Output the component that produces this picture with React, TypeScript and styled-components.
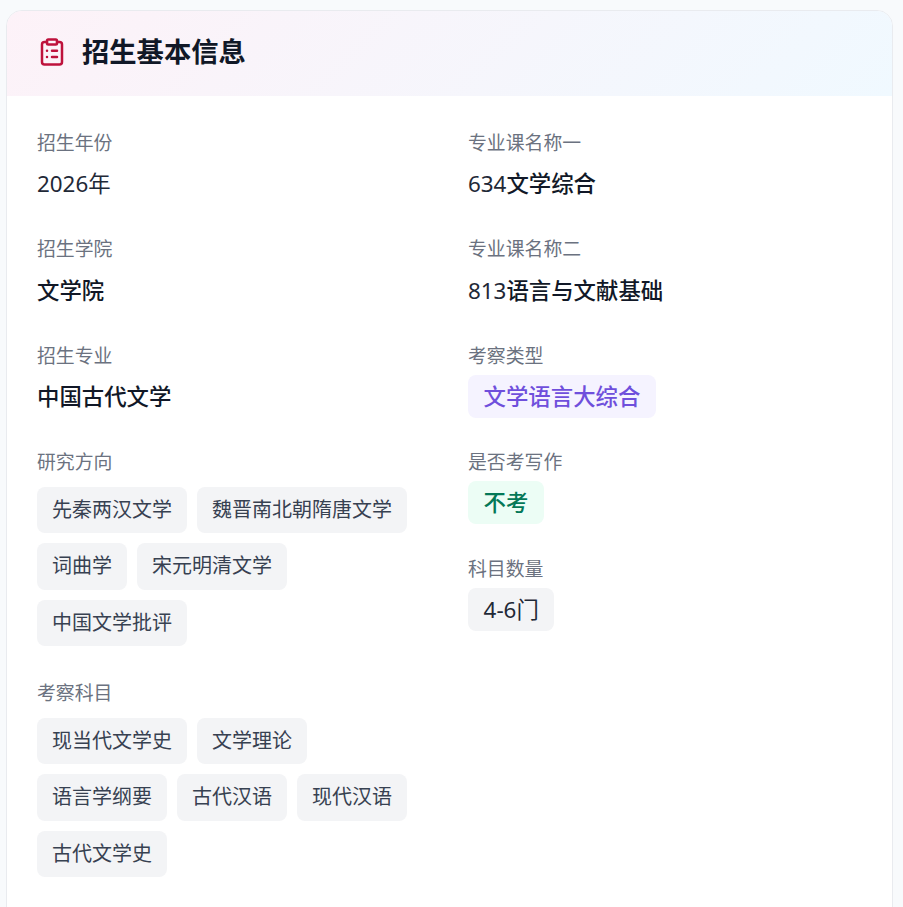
import React from "react";
import styled, { createGlobalStyle } from "styled-components";

const Global = createGlobalStyle`
  html, body { margin: 0; padding: 0; background: #f8fafc; }
  body { font-family: "Noto Sans", "Noto Sans CJK SC", sans-serif; color: #1f2937; }
`;

const Page = styled.div`
  height: 907px;
  overflow: hidden;
  padding: 10px 10px 0 6px;
  box-sizing: border-box;
`;

const Card = styled.section`
  background: #fff;
  border: 1px solid #e9ebef;
  border-radius: 16px;
  overflow: hidden;
  min-height: 960px;
`;

const Header = styled.header`
  height: 85px;
  display: flex;
  align-items: center;
  gap: 15px;
  padding-left: 30px;
  background: linear-gradient(135deg, #fdf2f8 0%, #f0f9ff 100%);

  svg {
    margin-bottom: 4px;
  }
`;

const Title = styled.h2`
  margin: 0 0 3px;
  font-size: 27.3px;
  line-height: 36px;
  font-weight: 700;
  color: #111827;
`;

const Body = styled.div`
  display: grid;
  grid-template-columns: 399px 399px;
  column-gap: 32px;
  padding: 33px 30px 30px;
`;

const Column = styled.div`
  display: flex;
  flex-direction: column;
  gap: 30.4px;
`;

const Field = styled.div`
  display: flex;
  flex-direction: column;
  gap: 5px;
`;

const Label = styled.div`
  font-size: 18.88px;
  line-height: 28px;
  color: #6b7280;
`;

const Value = styled.div`
  font-size: 22.4px;
  line-height: 41px;
  padding-top: 1.4px;
  padding-bottom: 0.6px;
  font-weight: 500;
  color: #111827;
`;

const Plain = styled.span`
  font-weight: 400;
  color: #1f2937;
`;

const Tags = styled.div`
  display: flex;
  flex-wrap: wrap;
  gap: 10px;
  margin: 5.6px 0 2.4px;
`;

const Tag = styled.span`
  background: #f3f4f6;
  border-radius: 8px;
  padding: 0 15px;
  height: 46.5px;
  line-height: 46px;
  font-size: 20px;
  color: #374151;
`;

const Badge = styled.span<{ $bg: string; $fg: string; $weight: number }>`
  align-self: flex-start;
  background: ${(p) => p.$bg};
  color: ${(p) => p.$fg};
  font-weight: ${(p) => p.$weight};
  border-radius: 8px;
  padding: 0 15.6px;
  height: 43px;
  line-height: 43px;
  font-size: 22.4px;
`;

const ClipboardIcon = () => (
  <svg width="30" height="30" viewBox="0 0 24 24" fill="none" stroke="#be123c" strokeWidth="2" strokeLinecap="round" strokeLinejoin="round">
    <rect x="8" y="2" width="8" height="4" rx="1" />
    <path d="M16 4h2a2 2 0 0 1 2 2v14a2 2 0 0 1-2 2H6a2 2 0 0 1-2-2V6a2 2 0 0 1 2-2h2" />
    <path d="M12 11h4M12 16h4M8 11h.01M8 16h.01" />
  </svg>
);

const TagField = ({ label, tags }: { label: string; tags: string[] }) => (
  <Field>
    <Label>{label}</Label>
    <Tags>
      {tags.map((t) => (
        <Tag key={t}>{t}</Tag>
      ))}
    </Tags>
  </Field>
);

export default function App() {
  return (
    <Page>
      <Global />
      <Card>
        <Header>
          <ClipboardIcon />
          <Title>招生基本信息</Title>
        </Header>
        <Body>
          <Column>
            <Field>
              <Label>招生年份</Label>
              <Value><Plain>2026年</Plain></Value>
            </Field>
            <Field>
              <Label>招生学院</Label>
              <Value>文学院</Value>
            </Field>
            <Field>
              <Label>招生专业</Label>
              <Value>中国古代文学</Value>
            </Field>
            <TagField label="研究方向" tags={["先秦两汉文学", "魏晋南北朝隋唐文学", "词曲学", "宋元明清文学", "中国文学批评"]} />
            <TagField label="考察科目" tags={["现当代文学史", "文学理论", "语言学纲要", "古代汉语", "现代汉语", "古代文学史"]} />
          </Column>
          <Column>
            <Field>
              <Label>专业课名称一</Label>
              <Value><Plain>634</Plain>文学综合</Value>
            </Field>
            <Field>
              <Label>专业课名称二</Label>
              <Value><Plain>813</Plain>语言与文献基础</Value>
            </Field>
            <Field>
              <Label>考察类型</Label>
              <Badge $bg="#f5f3ff" $fg="#6f4fdc" $weight={500}>文学语言大综合</Badge>
            </Field>
            <Field>
              <Label>是否考写作</Label>
              <Badge $bg="#ecfdf5" $fg="#047857" $weight={500}>不考</Badge>
            </Field>
            <Field>
              <Label>科目数量</Label>
              <Badge $bg="#f3f4f6" $fg="#1f2937" $weight={400}>4-6门</Badge>
            </Field>
          </Column>
        </Body>
      </Card>
    </Page>
  );
}
